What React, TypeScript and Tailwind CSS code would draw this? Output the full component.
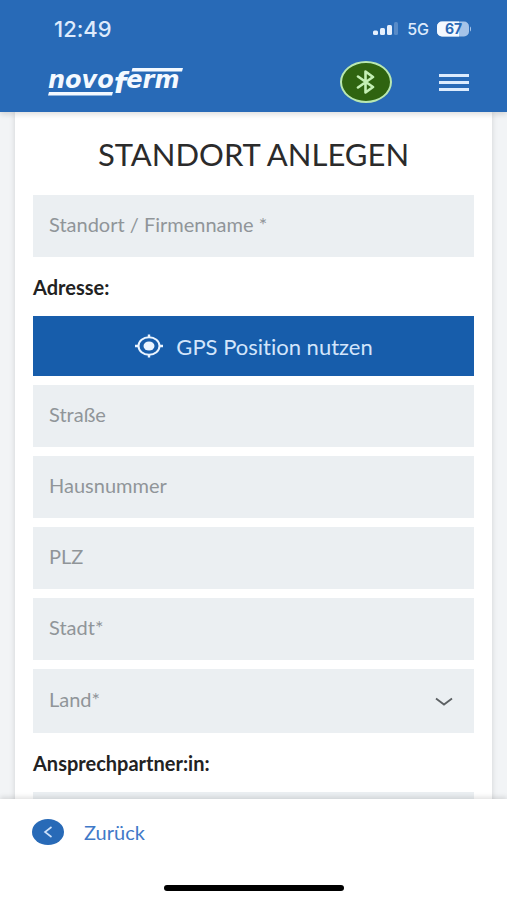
import { useState } from 'react';

// --- Types ---
interface Field {
  name: string;
  label: string;
}

const ADDRESS_FIELDS: Field[] = [
  { name: 'street', label: 'Straße' },
  { name: 'houseNumber', label: 'Hausnummer' },
  { name: 'zip', label: 'PLZ' },
  { name: 'city', label: 'Stadt*' },
];

const COUNTRIES = ['Deutschland', 'Österreich', 'Schweiz'];

// --- Icons ---
function Logo() {
  return (
    <svg width="136" height="46" viewBox="0 -8 136 46" fill="#f4f9ff" role="img" aria-label="novoferm">
      <text x="0" y="21" fontFamily="'DejaVu Sans', sans-serif" fontWeight="700" fontStyle="italic" fontSize="24">
        novo<tspan fontSize="29" dy="5">f</tspan><tspan dy="-5">erm</tspan>
      </text>
      <path d="M84.500 1H135l-1 3.500H83.500zM1 25h64l-1 3.500H0z" />
    </svg>
  );
}

function SignalIcon() {
  return (
    <svg width="26" height="14" viewBox="0 0 26 14" fill="#e6f0fd">
      <rect x="0" y="8.500" width="5" height="4.500" rx="1.500" />
      <rect x="7" y="6" width="5" height="7" rx="1.500" />
      <rect x="14" y="3" width="5" height="10" rx="1.500" />
      <rect x="21" y="0" width="4" height="13" rx="1.500" opacity="0.250" />
    </svg>
  );
}

function BatteryIcon() {
  return (
    <svg width="34" height="16" viewBox="0 0 34 16">
      <rect x="0" y="0.500" width="32" height="15" rx="5" fill="#a5c3e8" />
      <path d="M5 .5h17v15H5a5 5 0 0 1-5-5v-5a5 5 0 0 1 5-5z" fill="#f4f9ff" />
      <path d="M33 5.500c1.500 .6 1.500 4.400 0 5z" fill="#a5c3e8" />
      <text x="16.500" y="13" textAnchor="middle" fontFamily="Inter, sans-serif" fontWeight="700" fontSize="14" fill="#2868b5">67</text>
    </svg>
  );
}

function BluetoothIcon() {
  return (
    <svg width="20" height="24" viewBox="0 0 20 24" fill="none" stroke="#c4efb4" strokeWidth="2.600" strokeLinejoin="round" strokeLinecap="round">
      <path d="M2 6.500 17 17l-7.500 5.500v-21L17 7 2 17.500" />
    </svg>
  );
}

function LocationIcon() {
  return (
    <svg width="30" height="24" viewBox="0 0 30 24" fill="none" stroke="#eaf4ff">
      <ellipse cx="15" cy="12" rx="10.500" ry="8.700" strokeWidth="2" />
      <ellipse cx="15" cy="12" rx="5.500" ry="4.600" fill="#eaf4ff" stroke="none" />
      <path d="M15 .5v3M15 20.500v3M1 12h4M25 12h4" strokeWidth="2.400" />
    </svg>
  );
}

const fieldClass =
  'block w-full h-[62px] px-4 pb-1 bg-[#ebeff2] text-xl text-[#55595c] placeholder:text-[#909599] outline-none focus:ring-2 focus:ring-[#175dab]';

export default function App() {
  const [values, setValues] = useState<Record<string, string>>({});

  const update = (name: string, value: string) => {
    setValues(prev => ({ ...prev, [name]: value }));
  };

  return (
    <div className="h-screen flex flex-col bg-[#f2f4f6] font-['Lato',sans-serif] [font-variant-ligatures:none]">
      {/* Header */}
      <header className="relative z-10 h-28 shrink-0 bg-[#286ab7] shadow-[0_2px_6px_rgba(0,0,0,0.15)]">
        <div className="flex items-center justify-between h-[58px] pl-[54px] pr-9 font-['Inter',sans-serif] text-[#deebfc]">
          <span className="text-[22px] font-medium">12:49</span>
          <div className="flex items-center gap-2">
            <SignalIcon />
            <span className="text-base font-medium">5G</span>
            <BatteryIcon />
          </div>
        </div>

        <div className="flex items-center justify-between h-12 pl-12 pr-[38px]">
          <a href="#"><Logo /></a>
          <div className="flex items-center gap-[47px]">
            <button aria-label="Bluetooth" className="w-[52px] h-[42px] flex items-center justify-center rounded-[50%] border-2 border-[#b9e8b0] bg-[#2f6410]">
              <BluetoothIcon />
            </button>
            <button aria-label="Menü" className="flex flex-col gap-1 w-[30px]">
              <span className="w-full h-[3px] bg-[#dcebfd]" />
              <span className="w-full h-[3px] bg-[#dcebfd]" />
              <span className="w-full h-[3px] bg-[#dcebfd]" />
            </button>
          </div>
        </div>
      </header>

      {/* Form */}
      <main className="flex-1 min-h-0 overflow-y-auto [scrollbar-width:none] px-[15px]">
        <form className="bg-white px-[18px] pb-8 shadow-[0_0_6px_rgba(0,0,0,0.14)]" onSubmit={e => e.preventDefault()}>
          <h1 className="pt-[22px] pb-[21px] text-center text-[31px] leading-10 text-[#2b2b2b]">STANDORT ANLEGEN</h1>

          <input
            className={fieldClass}
            placeholder="Standort / Firmenname *"
            aria-label="Standort / Firmenname"
            value={values.company ?? ''}
            onChange={e => update('company', e.target.value)}
          />

          <h2 className="pt-[18px] pb-[17px] text-xl leading-6 font-bold text-[#222]">Adresse:</h2>

          <div className="flex flex-col gap-[9px]">
            <button type="button" className="flex items-center justify-center gap-3 h-[60px] bg-[#175dab] text-[22px] text-[#d3e5fb]">
              <LocationIcon />
              GPS Position nutzen
            </button>

            {ADDRESS_FIELDS.map(field => (
              <input
                key={field.name}
                className={fieldClass}
                placeholder={field.label}
                aria-label={field.label}
                value={values[field.name] ?? ''}
                onChange={e => update(field.name, e.target.value)}
              />
            ))}

            <div className="relative">
              <select
                aria-label="Land"
                className="block w-full h-16 px-4 pb-1 appearance-none bg-[#ebeff2] text-xl text-[#909599] outline-none"
                value={values.country ?? ''}
                onChange={e => update('country', e.target.value)}
              >
                <option value="">Land*</option>
                {COUNTRIES.map(country => <option key={country}>{country}</option>)}
              </select>
              <svg className="absolute right-[21px] top-7 pointer-events-none" width="18" height="10" viewBox="0 0 18 10" fill="none" stroke="#5c6063" strokeWidth="1.800">
                <path d="m1 1.500 8 6 8-6" />
              </svg>
            </div>
          </div>

          <h2 className="pt-[18px] pb-[17px] text-xl leading-6 font-bold text-[#222]">Ansprechpartner:in:</h2>

          <input
            className={fieldClass}
            placeholder="Vorname"
            aria-label="Vorname"
            value={values.firstName ?? ''}
            onChange={e => update('firstName', e.target.value)}
          />
        </form>
      </main>

      {/* Footer */}
      <footer className="relative z-10 shrink-0 flex flex-col items-center justify-between h-[101px] pt-5 pb-[9px] bg-white shadow-[0_-2px_5px_rgba(0,0,0,0.12)]">
        <a href="#" className="self-start flex items-center gap-5 pl-8 text-xl leading-6 text-[#3f79c8]">
          <span className="flex items-center justify-center w-8 h-[26px] rounded-[50%] bg-[#286ab7]">
            <svg width="10" height="12" viewBox="0 0 10 12" fill="none" stroke="#cfe2fa" strokeWidth="1.600">
              <path d="M8.500 1 2 6l6.500 5" />
            </svg>
          </span>
          Zurück
        </a>
        <div className="w-[180px] h-1.5 rounded-full bg-black" />
      </footer>
    </div>
  );
}
